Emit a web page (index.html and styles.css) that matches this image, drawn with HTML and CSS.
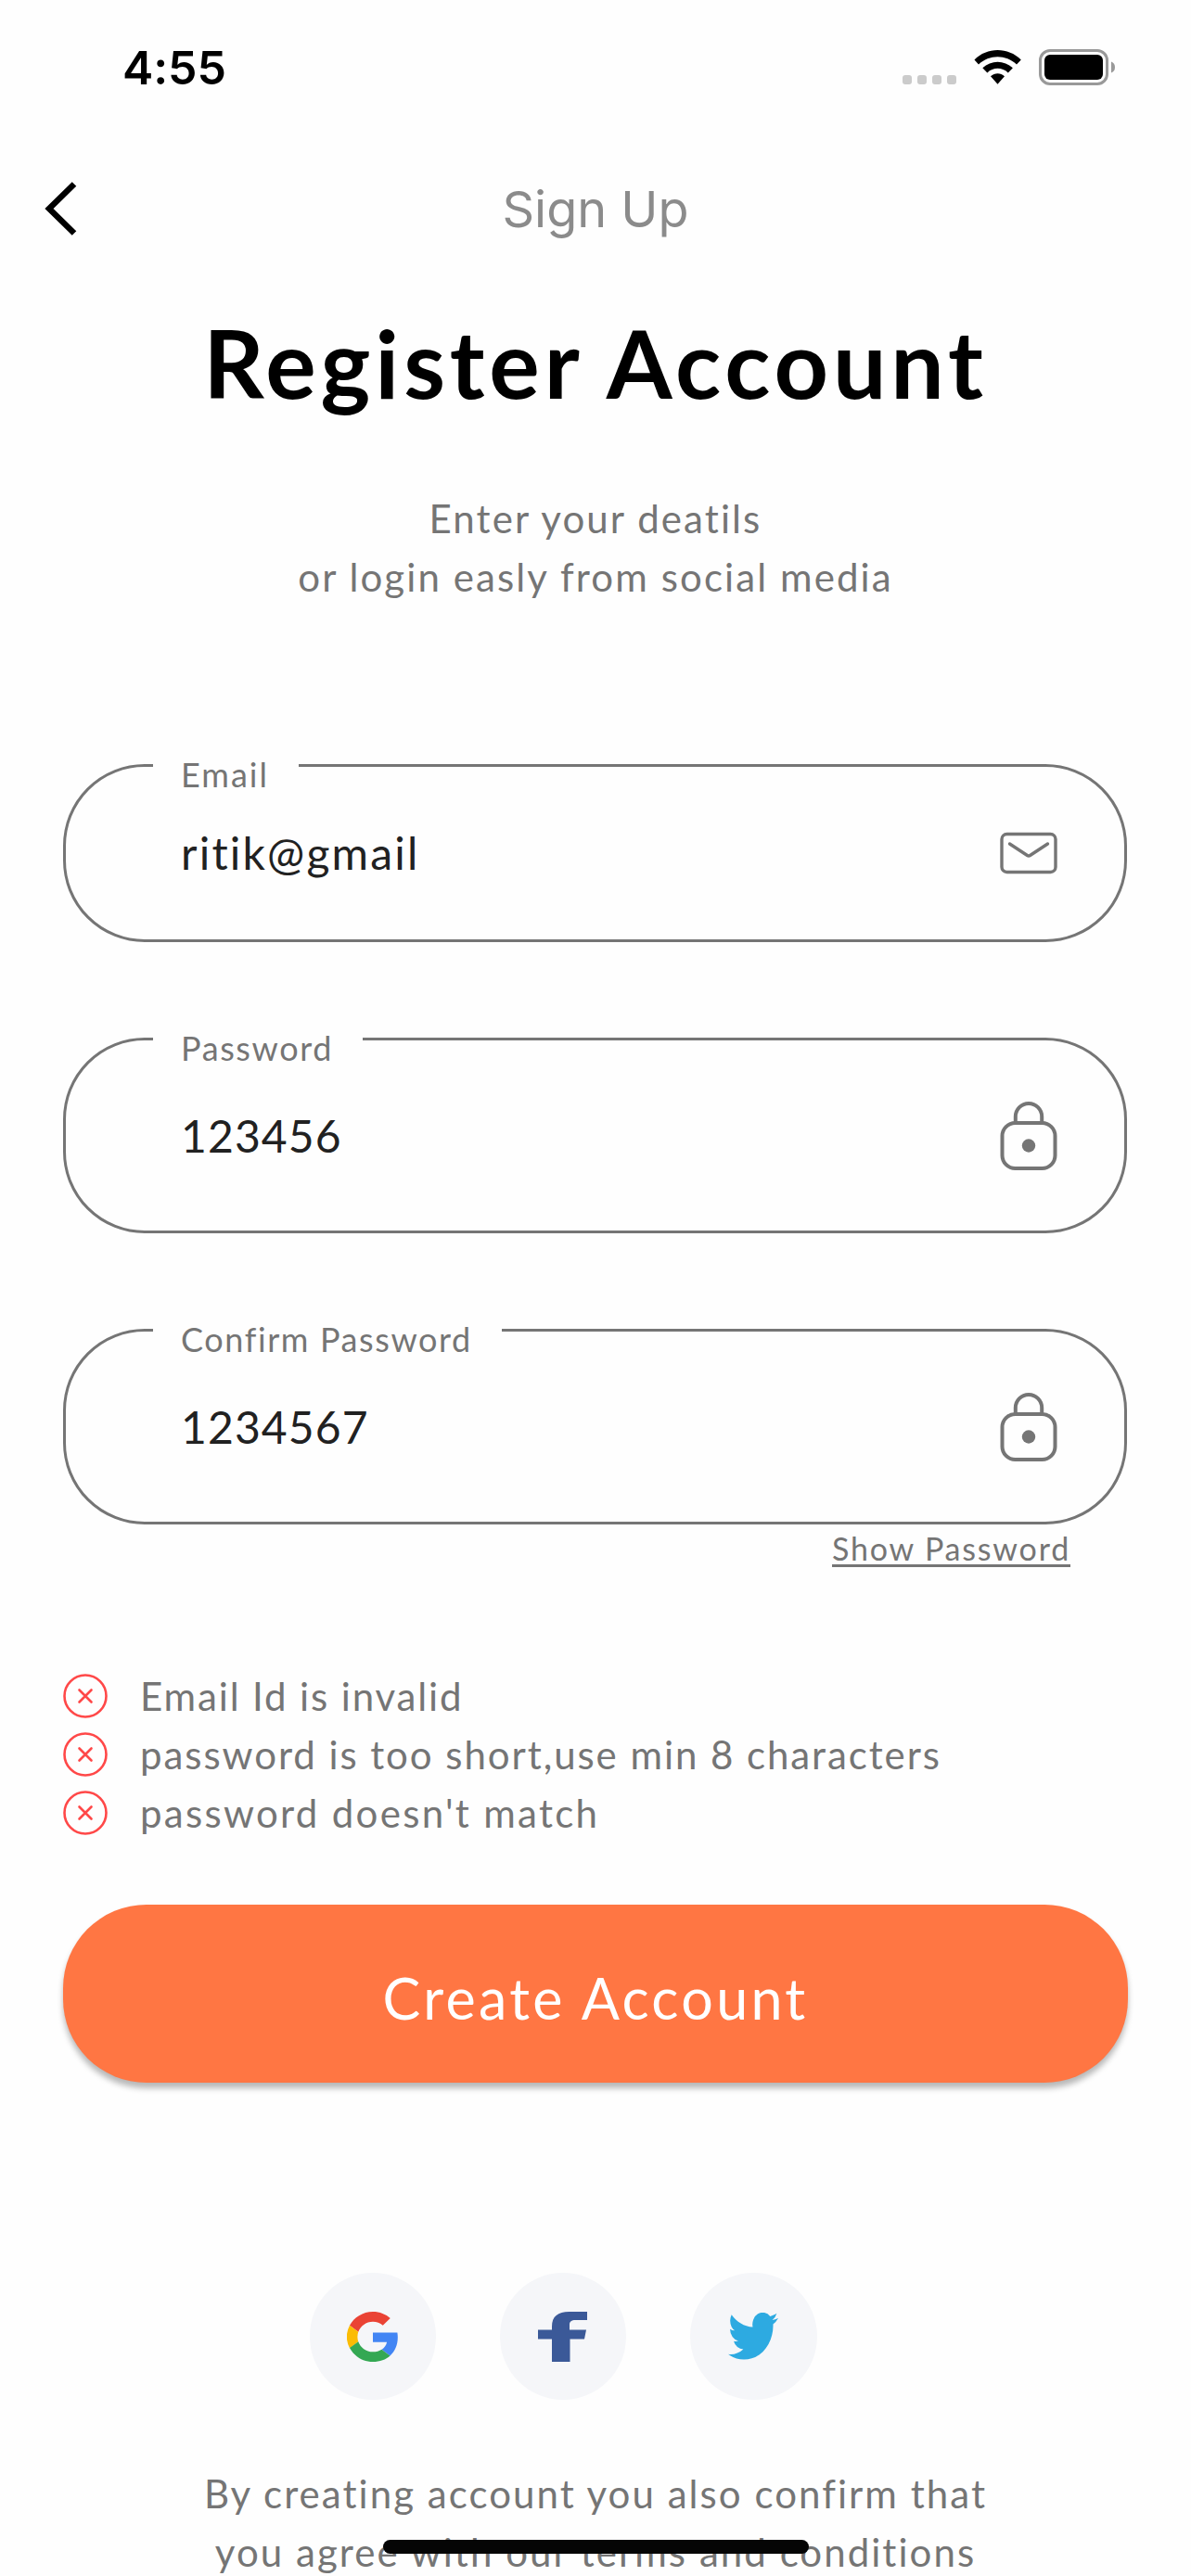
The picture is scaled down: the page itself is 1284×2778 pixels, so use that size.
FILE: index.html
```html
<!DOCTYPE html>
<html lang="en">
<head>
<meta charset="utf-8">
<title>Sign Up</title>
<link rel="stylesheet" href="styles.css">
</head>
<body>
<div class="screen">
  <header class="status">
    <span class="time">4:55</span>
    <svg class="status-icons" width="232" height="40" viewBox="0 0 232 40">
      <g fill="#cbcbcb"><rect x="0" y="28" width="10" height="10" rx="3"/><rect x="16" y="28" width="10" height="10" rx="3"/><rect x="32" y="28" width="10" height="10" rx="3"/><rect x="48" y="28" width="10" height="10" rx="3"/></g>
      <path d="M77.500 11.500C91 -2.500 114 -2.500 127.800 11.500L123 16.500C111.500 5.500 93.500 5.500 82 16.500ZM86.300 20.300C95.500 11.500 109.500 11.500 118.900 20.300L113.800 25.400C107.500 19.300 97.500 19.300 91.400 25.400ZM95 29.200C99.500 25.200 105.700 25.200 110 29.200L102.500 37.800Z"/>
      <rect x="148.500" y="1.500" width="72" height="36" rx="10.500" fill="none" stroke="#999" stroke-width="3"/>
      <rect x="153" y="6" width="63" height="27" rx="6"/>
      <path d="M225 13.500Q229 15 229 19.500T225 25.500Z" fill="#999"/>
    </svg>
  </header>
  <nav class="nav">
    <svg class="back" width="36" height="60" viewBox="0 0 36 60"><path d="M32 2.500L5 29L32 55.500" fill="none" stroke="#000" stroke-width="6.500"/></svg>
    <span class="nav-title">Sign Up</span>
  </nav>
  <main class="content">
    <h1 class="title">Register Account</h1>
    <p class="copy subtitle">Enter your deatils<br>or login easly from social media</p>
    <form class="form">
      <div class="field email">
        <label class="label">Email</label>
        <span class="value">ritik@gmail</span>
        <svg width="62" height="46" viewBox="0 0 62 46" fill="none" stroke="#757575" stroke-width="3.400" stroke-linecap="round" stroke-linejoin="round"><rect x="2" y="2.500" width="58" height="41" rx="5.500"/><path d="M10.500 13L29.500 25.500Q31 26.500 32.500 25.500L51.500 13"/></svg>
      </div>
      <div class="field">
        <label class="label">Password</label>
        <span class="value digits">123456</span>
        <svg width="62" height="74" viewBox="0 0 62 74" fill="none" stroke="#757575" stroke-width="4"><rect x="2.500" y="23" width="57" height="49" rx="14"/><path d="M16.800 23V16.200a14.200 14.200 0 0 1 28.400 0V23"/><circle cx="31" cy="47.500" r="7.200" fill="#757575" stroke="none"/></svg>
      </div>
      <div class="field">
        <label class="label">Confirm Password</label>
        <span class="value digits">1234567</span>
        <svg width="62" height="74" viewBox="0 0 62 74" fill="none" stroke="#757575" stroke-width="4"><rect x="2.500" y="23" width="57" height="49" rx="14"/><path d="M16.800 23V16.200a14.200 14.200 0 0 1 28.400 0V23"/><circle cx="31" cy="47.500" r="7.200" fill="#757575" stroke="none"/></svg>
      </div>
      <a class="show">Show Password</a>
      <ul class="errors copy">
        <li><svg width="48" height="48" viewBox="0 0 48 48" fill="none" stroke="#ff4848" stroke-width="2.600" stroke-linecap="round"><circle cx="24" cy="24" r="22.500"/><path d="M17.500 17.500l13 13m0-13l-13 13"/></svg><span class="e1">Email Id is invalid</span></li>
        <li><svg width="48" height="48" viewBox="0 0 48 48" fill="none" stroke="#ff4848" stroke-width="2.600" stroke-linecap="round"><circle cx="24" cy="24" r="22.500"/><path d="M17.500 17.500l13 13m0-13l-13 13"/></svg><span>password is too short,use min 8 characters</span></li>
        <li><svg width="48" height="48" viewBox="0 0 48 48" fill="none" stroke="#ff4848" stroke-width="2.600" stroke-linecap="round"><circle cx="24" cy="24" r="22.500"/><path d="M17.500 17.500l13 13m0-13l-13 13"/></svg><span class="e3">password doesn't match</span></li>
      </ul>
      <button class="submit" type="button">Create Account</button>
    </form>
    <div class="social">
      <span class="round google"><svg width="56" height="54" viewBox="0 0 48 48" preserveAspectRatio="none"><path fill="#EA4335" d="M24 9.500c3.540 0 6.710 1.220 9.210 3.600l6.850-6.850C35.900 2.380 30.470 0 24 0 14.620 0 6.510 5.380 2.560 13.220l7.980 6.190C12.430 13.720 17.740 9.500 24 9.500z"/><path fill="#4285F4" d="M46.980 24.550c0-1.570-.15-3.090-.38-4.550H24v9.020h12.940c-.58 2.960-2.260 5.480-4.780 7.180l7.730 6c4.510-4.180 7.090-10.360 7.090-17.650z"/><path fill="#FBBC05" d="M10.530 28.590A14.500 14.500 0 0 1 10.530 19.410l-7.980-6.190a24 24 0 0 0 0 21.560l7.980-6.190z"/><path fill="#34A853" d="M24 48c6.480 0 11.930-2.130 15.890-5.810l-7.730-6c-2.150 1.450-4.920 2.300-8.160 2.300-6.260 0-11.570-4.220-13.470-9.910l-7.980 6.190C6.510 42.620 14.620 48 24 48z"/></svg></span>
      <span class="round"><svg width="54" height="54" viewBox="0.500 0 54 54"><path fill="#3b5998" d="M15.500 54V29.500H0.500V19.500H15.500V16C15.500 5 22 0 34 0H53.500V9H41C36.500 9 34.500 10.500 34.500 14V19.500H52.500L50.500 29.500H35V54Z"/></svg></span>
      <span class="round"><svg width="54" height="52" viewBox="0 2.300 24 20" preserveAspectRatio="none"><path fill="#2DAAE1" d="M23.953 4.570a10 10 0 0 1-2.825.775 4.958 4.958 0 0 0 2.163-2.723c-.951.555-2.005.959-3.127 1.184a4.920 4.920 0 0 0-8.384 4.482C7.690 8.095 4.067 6.130 1.640 3.162a4.822 4.822 0 0 0-.666 2.475c0 1.710.870 3.213 2.188 4.096a4.904 4.904 0 0 1-2.228-.616v.060a4.923 4.923 0 0 0 3.946 4.827 4.996 4.996 0 0 1-2.212.085 4.936 4.936 0 0 0 4.604 3.417 9.867 9.867 0 0 1-6.102 2.105c-.390 0-.779-.023-1.170-.067a13.995 13.995 0 0 0 7.557 2.209c9.053 0 13.998-7.496 13.998-13.985 0-.210 0-.420-.015-.630A9.935 9.935 0 0 0 24 4.590z"/></svg></span>
    </div>
    <p class="copy terms">By creating account you also confirm that<br>you agree with our terms and conditions</p>
  </main>
  <div class="home-bar"></div>
</div>
</body>
</html>
```
FILE: styles.css
```css
* { box-sizing: border-box; margin: 0; padding: 0; }
html, body { background: #fff; }
.screen {
  position: relative;
  width: 1284px;
  height: 2778px;
  overflow: hidden;
  background: #fefefe;
  color: #757575;
  font-family: Lato, "Open Sans", sans-serif;
  font-variant-ligatures: none;
}
.status {
  display: flex;
  justify-content: space-between;
  align-items: flex-start;
  height: 150px;
  padding: 43px 79px 0 132px;
  color: #000;
}
.time { font: 600 50px/60px Inter, sans-serif; letter-spacing: -0.1px; }
.status-icons { margin-top: 10px; }
.nav {
  display: grid;
  grid-template-columns: 1fr auto 1fr;
  align-items: center;
  height: 152px;
  padding: 0 48px;
}
.nav-title { font: 400 54px/64px Inter, sans-serif; color: #8b8b8b; }
.content { padding: 29px 68px 0; }
.title {
  font-size: 102px;
  line-height: 120px;
  font-weight: 700;
  color: #000;
  text-align: center;
  white-space: nowrap;
  letter-spacing: 4.9px;
}
.copy { font-size: 42px; line-height: 63px; white-space: nowrap; letter-spacing: 2px; }
.subtitle { margin-top: 77px; text-align: center; letter-spacing: 2.1px; }
.form { display: flex; flex-direction: column; margin-top: 170px; }
.field {
  position: relative;
  display: flex;
  justify-content: space-between;
  align-items: center;
  width: 1147px;
  height: 211px;
  margin-bottom: 103px;
  padding: 0 72px 0 124px;
  border: 3px solid #757575;
  border-radius: 88px;
}
.field.email { height: 192px; }
.label {
  position: absolute;
  top: -14px;
  left: 94px;
  padding: 0 32px 0 30px;
  background: #fefefe;
  font-size: 36px;
  line-height: 44px;
  white-space: nowrap;
  letter-spacing: 1.6px;
}
.email .label { letter-spacing: 2px; }
.value { font-size: 48px; line-height: 60px; color: #212121; letter-spacing: 2.2px; }
.value.digits { letter-spacing: 1.1px; }
.show {
  align-self: flex-end;
  margin: -97px 62px 0 0;
  font-size: 34px;
  line-height: 40px;
  letter-spacing: 1.8px;
  text-decoration: underline;
  text-decoration-thickness: 3px;
  text-underline-offset: 4px;
  text-decoration-skip-ink: none;
}
.errors { margin-top: 107px; list-style: none; letter-spacing: 1.93px; }
.errors li { display: flex; align-items: center; height: 63px; gap: 35px; }
.errors span { padding-top: 2px; }
.e1 { letter-spacing: 1.87px; }
.e3 { letter-spacing: 2.3px; }
.submit {
  height: 192px;
  margin-top: 68px;
  padding-top: 9px;
  border: 0;
  border-radius: 90px;
  background: #ff7643;
  box-shadow: 0 6px 6px rgba(0, 0, 0, .28);
  color: #fff;
  font: 400 61px/76px Lato, sans-serif;
  letter-spacing: 3.3px;
}
.social { display: flex; gap: 68.5px; margin: 205px 0 0 265.5px; }
.round {
  display: flex;
  align-items: center;
  justify-content: center;
  width: 136.7px;
  height: 137px;
  border-radius: 50%;
  background: #f5f6f9;
}
.google svg { margin-left: 1px; }
.terms { margin-top: 70px; text-align: center; letter-spacing: 2.04px; }
.home-bar {
  position: absolute;
  left: 413px;
  bottom: 24px;
  width: 459px;
  height: 15px;
  border-radius: 8px;
  background: #050505;
}
```
